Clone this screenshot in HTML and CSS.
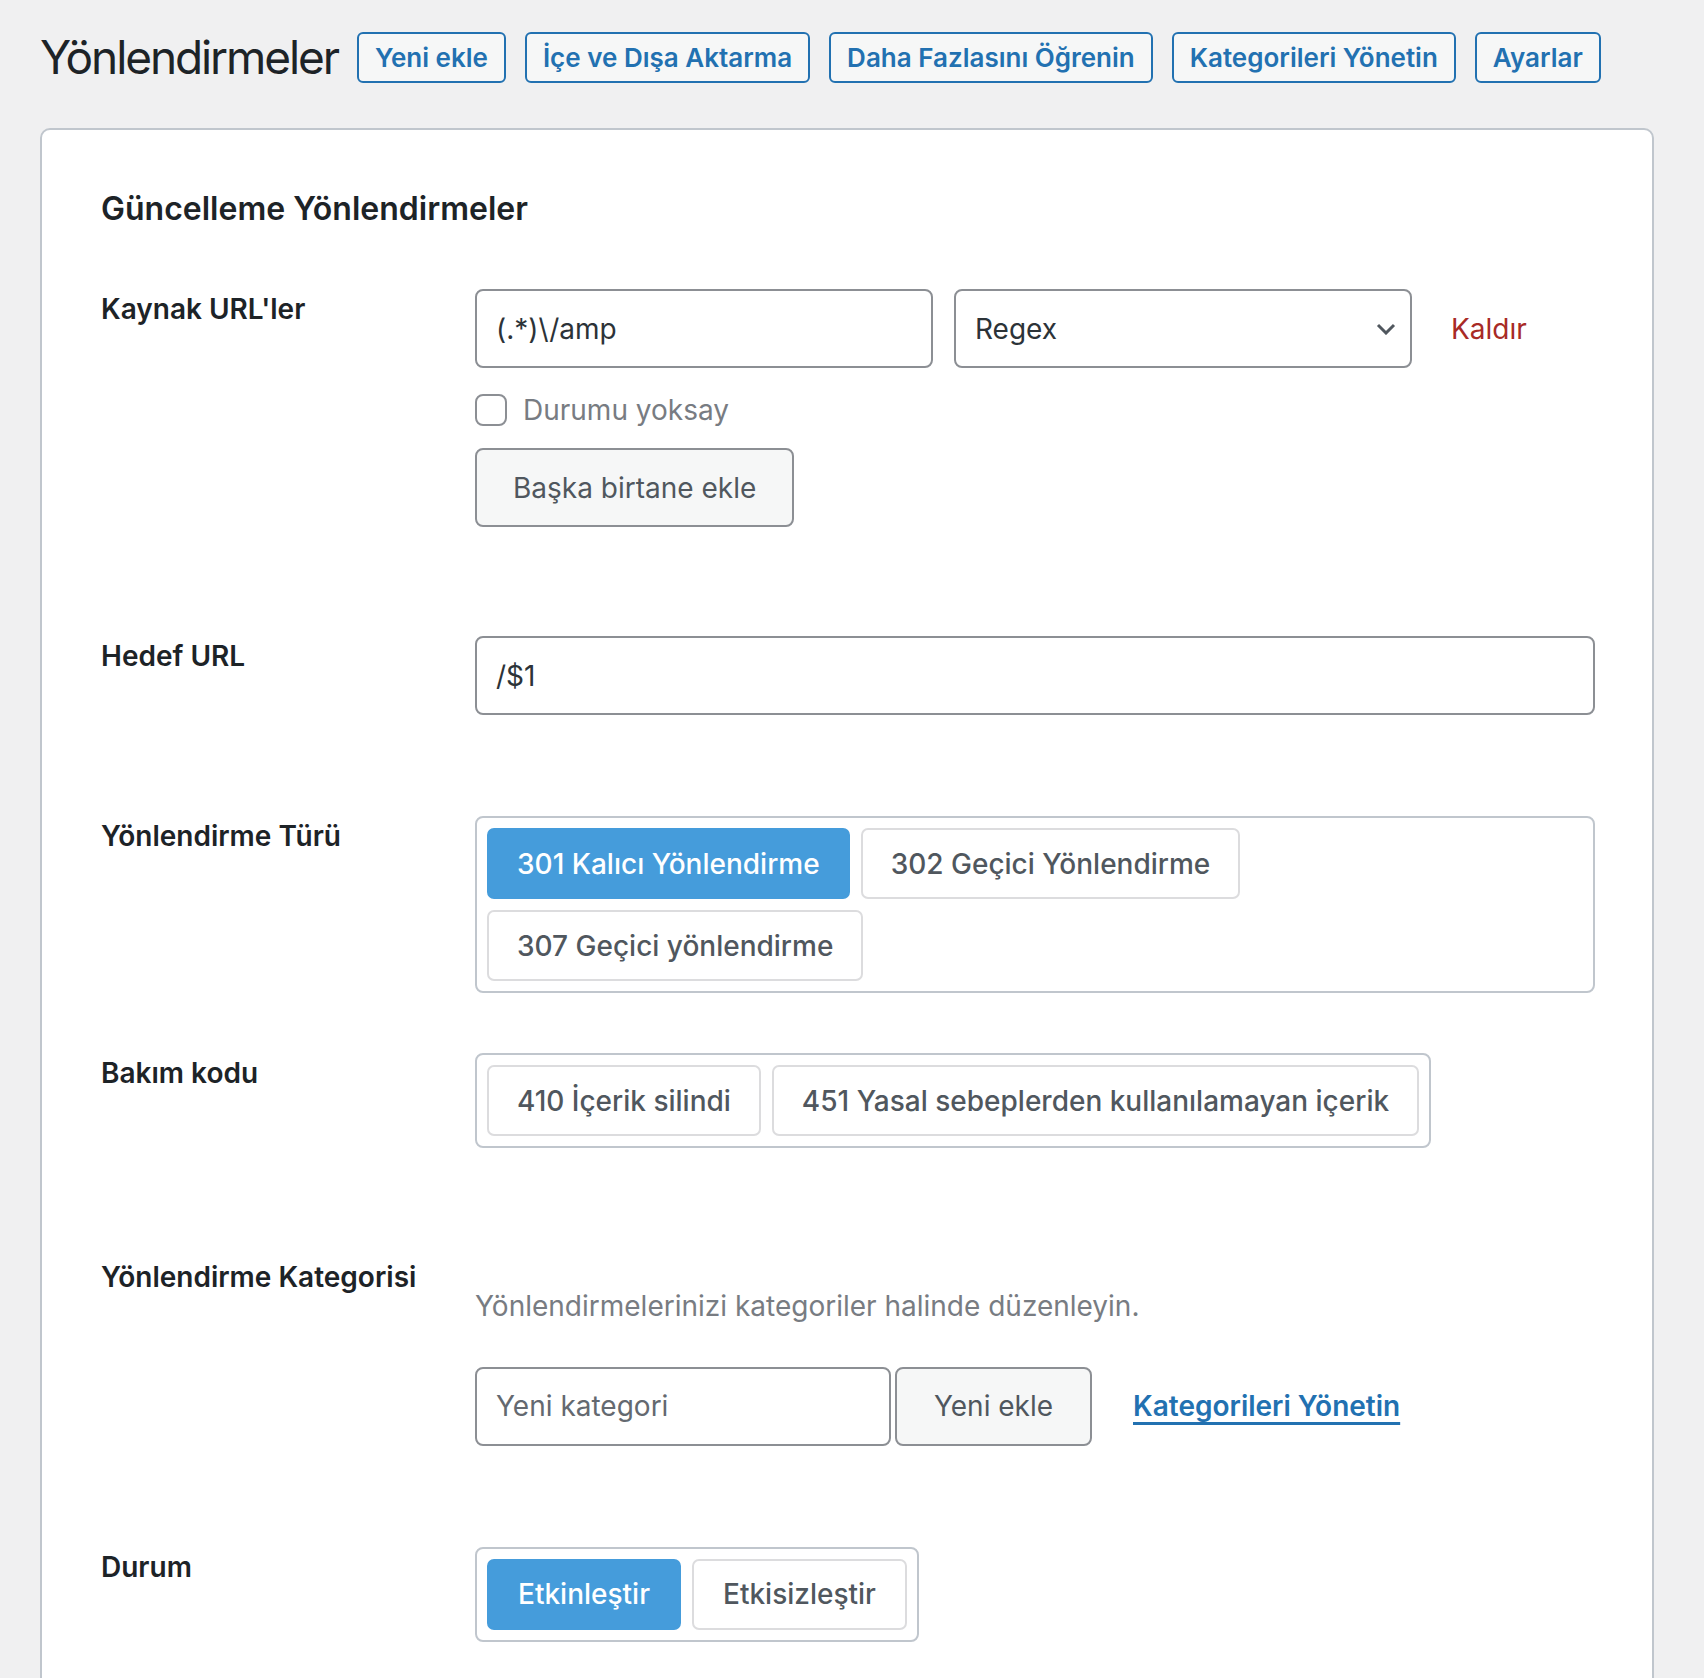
FILE: index.html
```html
<!DOCTYPE html>
<html lang="tr">
<head>
  <meta charset="UTF-8" />
  <meta name="viewport" content="width=device-width, initial-scale=1.0" />
  <title>Yönlendirmeler</title>
  <link rel="stylesheet" href="styles.css">
</head>
<body>
  <div class="wrap">
    <!-- Başlık ve üst eylemler -->
    <div class="page-head">
      <h1 class="page-title">Yönlendirmeler</h1>
      <a href="#" class="title-action">Yeni ekle</a>
      <a href="#" class="title-action">İçe ve Dışa Aktarma</a>
      <a href="#" class="title-action">Daha Fazlasını Öğrenin</a>
      <a href="#" class="title-action">Kategorileri Yönetin</a>
      <a href="#" class="title-action">Ayarlar</a>
    </div>

    <!-- Düzenleme formu -->
    <div class="card">
      <h2 class="card-title">Güncelleme Yönlendirmeler</h2>

      <div class="field field--loose">
        <div class="field-label">Kaynak URL'ler</div>
        <div class="field-body">
          <div class="source-row">
            <input class="text-input source-input" type="text" value="(.*)\/amp" />
            <div class="select-wrap">
              <select class="select">
                <option>Regex</option>
              </select>
              <svg class="select-arrow" width="20" height="12" viewBox="0 0 20 12">
                <polyline points="2,2 10,10 18,2" fill="none" stroke="#50575e" stroke-width="3" />
              </svg>
            </div>
            <a href="#" class="remove-link">Kaldır</a>
          </div>
          <label class="check-row">
            <input type="checkbox" class="checkbox" />
            <span>Durumu yoksay</span>
          </label>
          <button class="btn-secondary add-source">Başka birtane ekle</button>
        </div>
      </div>

      <div class="field">
        <div class="field-label">Hedef URL</div>
        <div class="field-body">
          <input class="text-input" type="text" value="/$1" />
        </div>
      </div>

      <div class="field field--compact">
        <div class="field-label">Yönlendirme Türü</div>
        <div class="field-body">
          <div class="choice-group">
            <button class="choice is-active">301 Kalıcı Yönlendirme</button>
            <button class="choice">302 Geçici Yönlendirme</button>
            <button class="choice">307 Geçici yönlendirme</button>
          </div>
        </div>
      </div>

      <div class="field field--loose">
        <div class="field-label">Bakım kodu</div>
        <div class="field-body">
          <div class="choice-group">
            <button class="choice">410 İçerik silindi</button>
            <button class="choice">451 Yasal sebeplerden kullanılamayan içerik</button>
          </div>
        </div>
      </div>

      <div class="field">
        <div class="field-label">Yönlendirme Kategorisi</div>
        <div class="field-body">
          <p class="field-help">Yönlendirmelerinizi kategoriler halinde düzenleyin.</p>
          <div class="category-row">
            <input class="text-input category-input" type="text" placeholder="Yeni kategori" />
            <button class="btn-secondary category-add">Yeni ekle</button>
            <a href="#" class="manage-link">Kategorileri Yönetin</a>
          </div>
        </div>
      </div>

      <div class="field">
        <div class="field-label">Durum</div>
        <div class="field-body">
          <div class="choice-group choice-group--status">
            <button class="choice is-active">Etkinleştir</button>
            <button class="choice">Etkisizleştir</button>
          </div>
        </div>
      </div>
    </div>
  </div>
</body>
</html>
```

FILE: styles.css
```css
/* Renkler */
:root {
  --bg-page: #f0f0f1;
  --text: #1d2327;
  --text-muted: #50575e;
  --text-light: #787c82;
  --accent: #2271b1;
  --active: #459cdb;
  --danger: #a82a26;
  --input-border: #8c8f94;
  --box-border: #c0c6cd;
  --choice-border: #dcdcde;
}

* {
  box-sizing: border-box;
}

body {
  margin: 0;
  background-color: var(--bg-page);
  font-family: Inter, "Liberation Sans", sans-serif;
  color: var(--text);
}

.wrap {
  padding: 28px 50px 0 40px;
}

/* Başlık satırı */
.page-head {
  display: flex;
  align-items: center;
  gap: 19px;
}

.page-title {
  margin: 0;
  font-size: 46px;
  font-weight: 400;
  line-height: 1.3;
  letter-spacing: -2.1px;
}

.title-action {
  padding: 8px 16px;
  font-size: 26px;
  font-weight: 600;
  line-height: 31px;
  color: var(--accent);
  text-decoration: none;
  background-color: #f6f7f7;
  border: 2px solid var(--accent);
  border-radius: 6px;
}

/* Form kartı */
.card {
  margin-top: 40px;
  padding: 58px 57px 60px 59px;
  background-color: #fff;
  border: 2px solid var(--box-border);
  border-radius: 10px;
}

.card-title {
  margin: 0 0 60px;
  font-size: 32px;
  font-weight: 600;
  line-height: 1.3;
}

.field {
  display: grid;
  grid-template-columns: 374px 1fr;
  padding-bottom: 101px;
}
.field--loose {
  padding-bottom: 109px;
}
.field--compact {
  padding-bottom: 60px;
}

.field-label {
  padding-top: 2px;
  font-size: 28px;
  font-weight: 600;
  line-height: 1.3;
}

.field-body {
  display: flex;
  flex-direction: column;
  align-items: flex-start;
}

/* Metin kutuları ve seçim */
.text-input,
.select {
  width: 100%;
  height: 79px;
  padding: 0 19px;
  font-family: inherit;
  font-size: 28px;
  color: #2c3338;
  background-color: #fff;
  border: 2px solid var(--input-border);
  border-radius: 8px;
  outline: none;
}
.text-input::placeholder {
  color: #646970;
}

.source-row {
  display: flex;
  align-items: center;
  gap: 21px;
}
.source-input {
  width: 458px;
}
.select-wrap {
  position: relative;
  width: 458px;
}
.select {
  appearance: none;
}
.select-arrow {
  position: absolute;
  right: 16px;
  top: 34px;
  pointer-events: none;
}
.remove-link {
  margin-left: 18px;
  font-size: 28px;
  color: var(--danger);
  text-decoration: none;
}

.check-row {
  display: flex;
  align-items: center;
  gap: 16px;
  margin-top: 25px;
  font-size: 28px;
  color: var(--text-light);
}
.checkbox {
  appearance: none;
  width: 32px;
  height: 32px;
  margin: 0;
  border: 2px solid var(--input-border);
  border-radius: 8px;
  background-color: #fff;
}

.btn-secondary {
  height: 79px;
  padding: 0 36px;
  font-family: inherit;
  font-size: 28px;
  color: var(--text-muted);
  background-color: #f6f7f7;
  border: 2px solid var(--input-border);
  border-radius: 8px;
}
.add-source {
  margin-top: 21px;
}

/* Buton grupları */
.choice-group {
  display: inline-flex;
  flex-wrap: wrap;
  gap: 11px;
  max-width: 100%;
  padding: 10px;
  border: 2px solid var(--box-border);
  border-radius: 8px;
}
.choice {
  height: 71px;
  padding: 0 28px;
  font-family: inherit;
  font-size: 28px;
  font-weight: 500;
  color: var(--text-muted);
  background-color: #fff;
  border: 2px solid var(--choice-border);
  border-radius: 7px;
}
.choice.is-active {
  color: #fff;
  background-color: var(--active);
  border-color: var(--active);
}
.choice-group--status .choice {
  padding: 0 29px;
}

/* Kategori */
.field-help {
  margin: 30px 0 40px;
  font-size: 28px;
  line-height: 1.4;
  color: var(--text-light);
}
.category-row {
  display: flex;
  align-items: center;
}
.category-input {
  width: 416px;
}
.category-add {
  width: 197px;
  margin-left: 4px;
  padding: 0;
}
.manage-link {
  margin-left: 41px;
  font-size: 28px;
  font-weight: 600;
  color: var(--accent);
  text-decoration: underline;
  text-decoration-thickness: 3px;
  text-underline-offset: 6px;
}
```
